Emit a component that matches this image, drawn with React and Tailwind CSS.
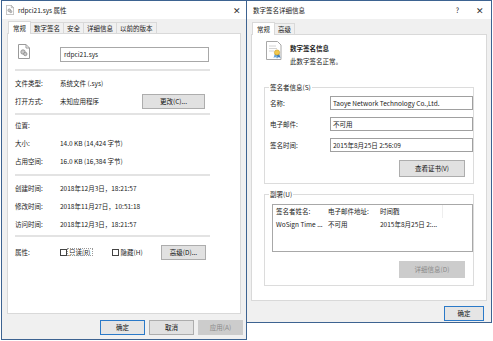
import React from 'react';

const font = "font-['Noto_Sans_CJK_SC','Noto_Sans',sans-serif]";

function FileIcon({ small }) {
  const s = small ? 'w-[8px] h-[10px]' : 'w-[12px] h-[15px]';
  return (
    <svg viewBox="0 0 12 15" className={s}>
      <path d="M0.5 0.5h7.5l3.5 3.5v10.5h-11z" fill="#fff" stroke="#9a9a9a" />
      <path d="M8 0.5v3.5h3.5" fill="none" stroke="#9a9a9a" />
      <circle cx="5" cy="8" r="2.2" fill="#c8c8c8" stroke="#8a8a8a" strokeWidth="0.8" />
      <circle cx="7.3" cy="10" r="1.7" fill="#c8c8c8" stroke="#8a8a8a" strokeWidth="0.8" />
    </svg>
  );
}

function CertIcon() {
  return (
    <svg viewBox="0 0 16 19" className="w-[16px] h-[19px]">
      <path d="M0.5 0.5h11l3.5 3.5v14.5h-14.5z" fill="#fff" stroke="#a8a8a8" />
      <path d="M3 5h7M3 7.5h8M3 10h5" stroke="#c9c9c9" strokeWidth="0.8" />
      <path d="M9 12l-1.5 5 1.8-1 1.2 1.6 0.8-4.6z" fill="#6aa7d8" />
      <path d="M13 12l1.5 5-1.8-1-1.2 1.6-0.8-4.6z" fill="#3f7fbf" />
      <circle cx="11" cy="11.5" r="2.6" fill="#f2c94c" stroke="#c89b22" strokeWidth="0.6" />
    </svg>
  );
}

function Btn({ children, w = 'w-[45px]', primary, disabled, h = 'h-[15px]' }) {
  return (
    <div
      className={`${w} ${h} flex items-center justify-center border ${
        primary ? 'border-[#2a79c8] bg-[#e5e5e5]' : disabled ? 'border-[#cccccc] bg-[#cccccc]' : 'border-[#adadad] bg-[#e1e1e1]'
      } ${disabled ? 'text-[#8a8a8a]' : 'text-[#111]'}`}
    >
      {children}
    </div>
  );
}

function Row({ label, children, h = 'h-[18px]' }) {
  return (
    <div className={`flex items-center ${h}`}>
      <div className="w-[45px] shrink-0">{label}</div>
      <div className="flex-1 flex items-center">{children}</div>
    </div>
  );
}

function Sep({ mt }) {
  return <div className={`${mt} h-[2px] w-[195px] bg-[#e3e3e3]`} />;
}

function Tab({ children, active }) {
  return active ? (
    <div className="h-[13px] px-[4px] flex items-center bg-white border border-b-0 border-[#d9d9d9] relative z-10 -mb-px">{children}</div>
  ) : (
    <div className="h-[11px] px-[3px] flex items-center border border-b-0 border-l-0 border-[#d9d9d9] bg-[#f0f0f0]">{children}</div>
  );
}

function Input({ children, w }) {
  return (
    <div className={`${w} h-[14px] border border-[#a0a0a0] bg-white flex items-center px-[2px]`}>{children}</div>
  );
}

function PropertiesWindow() {
  return (
    <div className="w-[246px] h-[340px] ml-px border border-[#3d6391] bg-[#f0f0f0] flex flex-col shrink-0">
      <div className="h-[18px] bg-white flex items-center pl-[4px] pr-[5px]">
        <FileIcon small />
        <span className="ml-[4px] text-[6.5px]">rdpci21.sys 属性</span>
        <span className="ml-auto text-[9px] text-[#333] leading-none">✕</span>
      </div>
      <div className="flex items-end h-[14px] pl-[6px]">
        <Tab active>常规</Tab>
        <Tab>数字签名</Tab>
        <Tab>安全</Tab>
        <Tab>详细信息</Tab>
        <Tab>以前的版本</Tab>
      </div>
      <div className="mx-[5px] h-[281px] bg-white border border-[#d9d9d9] pl-[7px]">
        <div className="flex items-center h-[15px] mt-[13px]">
          <div className="w-[45px] pl-[3px] -mt-[6px]">
            <FileIcon />
          </div>
          <div className="w-[149px] h-[15px] border border-[#a8a8a8] flex items-center px-[3px]">rdpci21.sys</div>
        </div>
        <Sep mt="mt-[7px]" />
        <div className="mt-[3px]">
          <Row label="文件类型:">系统文件 (.sys)</Row>
          <Row label="打开方式:">
            <span>未知应用程序</span>
            <div className="ml-auto mr-[35px]">
              <Btn w="w-[63px]">更改(C)...</Btn>
            </div>
          </Row>
        </div>
        <Sep mt="mt-[3px]" />
        <div className="mt-[1px]">
          <Row label="位置:" />
          <Row label="大小:">14.0 KB (14,424 字节)</Row>
          <Row label="占用空间:">16.0 KB (16,384 字节)</Row>
        </div>
        <Sep mt="mt-[4px]" />
        <div className="mt-[3px]">
          <Row label="创建时间:">2018年12月3日，18:21:57</Row>
          <Row label="修改时间:">2018年11月27日，10:51:18</Row>
          <Row label="访问时间:">2018年12月3日，18:21:57</Row>
        </div>
        <Sep mt="mt-[2px]" />
        <div className="mt-[6px]">
          <Row label="属性:">
            <div className="flex items-center">
              <div className="w-[7px] h-[7px] border border-[#444] mr-px" />
              <span className="outline outline-1 outline-dotted outline-[#999] px-px">只读(R)</span>
            </div>
            <div className="flex items-center ml-[20px]">
              <div className="w-[7px] h-[7px] border border-[#444] mr-[2px]" />
              <span>隐藏(H)</span>
            </div>
            <div className="ml-auto mr-[34px]">
              <Btn w="w-[45px]">高级(D)...</Btn>
            </div>
          </Row>
        </div>
      </div>
      <div className="flex justify-end gap-[4px] pr-[3px] mt-[6px]">
        <Btn primary>确定</Btn>
        <Btn>取消</Btn>
        <Btn disabled>应用(A)</Btn>
      </div>
    </div>
  );
}

function GroupBox({ label, h, children }) {
  return (
    <div className={`relative mx-[12px] ${h} border border-[#dcdcdc]`}>
      <div className="absolute -top-[4px] left-[4px] bg-white px-px leading-none">{label}</div>
      {children}
    </div>
  );
}

function SignatureWindow() {
  return (
    <div className="w-[245px] h-[323px] border border-l-0 border-[#3d6391] bg-[#f0f0f0] flex flex-col shrink-0">
      <div className="h-[18px] bg-white flex items-center pl-[6px] pr-[7px]">
        <span>数字签名详细信息</span>
        <span className="ml-auto mr-[17px] text-[7px]">?</span>
        <span className="text-[9px] text-[#333] leading-none">✕</span>
      </div>
      <div className="flex items-end h-[15px] pl-[5px]">
        <Tab active>常规</Tab>
        <Tab>高级</Tab>
      </div>
      <div className="mx-[4px] h-[267px] bg-white border border-[#d9d9d9]">
        <div className="flex mt-[6px] ml-[14px]">
          <CertIcon />
          <div className="ml-[8px] mt-[4px]">
            <div className="font-bold">数字签名信息</div>
            <div className="mt-[6px]">此数字签名正常。</div>
          </div>
        </div>
        <div className="mt-[23px]">
          <GroupBox label="签名者信息(S)" h="h-[97px]">
            <div className="pl-[5px] pt-[8px]">
              <div className="flex items-center h-[14px]">
                <div className="w-[60px]">名称:</div>
                <Input w="w-[143px]">Taoye Network Technology Co.,Ltd.</Input>
              </div>
              <div className="flex items-center h-[14px] mt-[7px]">
                <div className="w-[60px]">电子邮件:</div>
                <Input w="w-[143px]">不可用</Input>
              </div>
              <div className="flex items-center h-[14px] mt-[7px]">
                <div className="w-[60px]">签名时间:</div>
                <Input w="w-[143px]">2015年8月25日 2:56:09</Input>
              </div>
              <div className="flex justify-end mr-[8px] mt-[8px]">
                <Btn w="w-[66px]" h="h-[17px]">查看证书(V)</Btn>
              </div>
            </div>
          </GroupBox>
        </div>
        <div className="mt-[10px]">
          <GroupBox label="副署(U)" h="h-[92px]">
            <div className="ml-[7px] mt-[9px] w-[201px] h-[48px] border border-[#a8a8a8] relative">
              <div className="flex h-[13px] items-center pl-[3px]">
                <div className="w-[52px]">签名者姓名:</div>
                <div className="w-[52px]">电子邮件地址:</div>
                <div>时间戳</div>
              </div>
              <div className="flex h-[12px] items-center pl-[3px]">
                <div className="w-[52px]">WoSign Time ...</div>
                <div className="w-[52px]">不可用</div>
                <div>2015年8月25日 2:...</div>
              </div>
              <div className="absolute top-0 left-[169px] w-px h-[13px] bg-[#eeeeee]" />
            </div>
            <div className="flex justify-end mr-[8px] mt-[9px]">
              <Btn w="w-[66px]" h="h-[17px]" disabled>详细信息(D)</Btn>
            </div>
          </GroupBox>
        </div>
      </div>
      <div className="flex justify-end pr-[7px] mt-[5px]">
        <Btn primary w="w-[40px]">确定</Btn>
      </div>
    </div>
  );
}

export default function App() {
  return (
    <div className={`w-[493px] h-[341px] bg-white flex text-[6.5px] leading-none text-[#1a1a1a] ${font}`}>
      <PropertiesWindow />
      <SignatureWindow />
    </div>
  );
}
